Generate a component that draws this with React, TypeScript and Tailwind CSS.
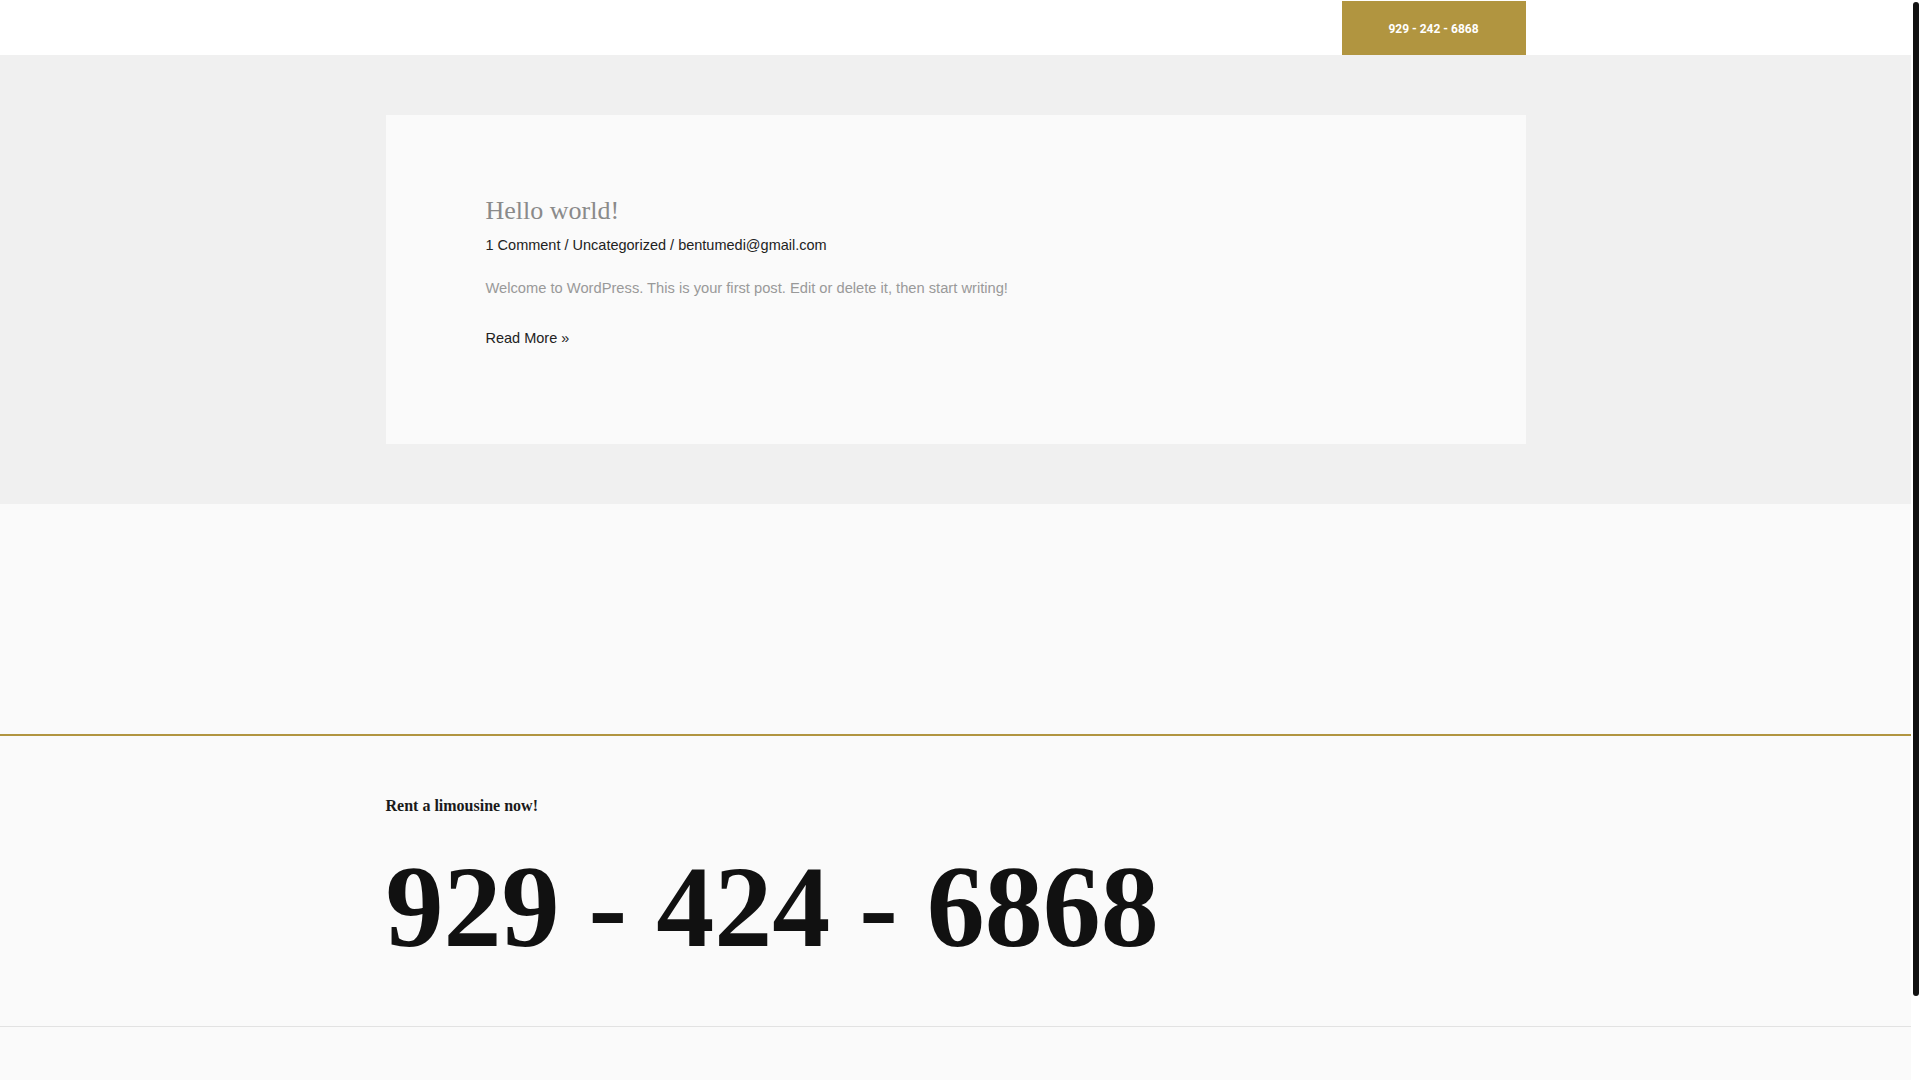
import React from 'react'

const serif = 'font-["Liberation_Serif",_"Times_New_Roman",_serif]'
const sans = 'font-["Liberation_Sans",_Arial,_sans-serif]'

function Header() {
  return (
    <header className="h-[55px] bg-white pt-px">
      <div className="mx-auto flex h-full max-w-[1140px] justify-end">
        <a
          href="#"
          className="flex h-[54px] w-[184px] items-center justify-center bg-[#b19540] pt-[2px] font-['Roboto',_sans-serif] text-[12px] font-bold text-white"
        >
          929 - 242 - 6868
        </a>
      </div>
    </header>
  )
}

function PostCard() {
  return (
    <article className="bg-[#fafafa] px-[100px] pt-[80px] pb-[94px]">
      <h2 className={`${serif} text-[26px] leading-[32px] text-[#8a8a8a]`}>
        <a href="#">Hello world!</a>
      </h2>
      <div className={`${sans} mt-[6px] text-[14.5px] leading-[24px] text-[#222]`}>
        <a href="#">1 Comment</a> / <a href="#">Uncategorized</a> / <a href="#">bentumedi@gmail.com</a>
      </div>
      <p className={`${sans} mt-[19px] text-[14.7px] leading-[24px] text-[#999]`}>
        Welcome to WordPress. This is your first post. Edit or delete it, then start writing!
      </p>
      <p className={`${sans} mt-[26px] text-[14.5px] leading-[24px] text-[#222]`}>
        <a href="#">Read More »</a>
      </p>
    </article>
  )
}

function CallToAction() {
  return (
    <section className="border-t-2 border-[#b19540] bg-[#fafafa]">
      <div className="mx-auto max-w-[1140px] pt-[56px] pb-[61px]">
        <p className={`${serif} text-[16px] font-bold leading-[27px] text-[#1a1a1a]`}>Rent a limousine now!</p>
        <p className={`${serif} mt-[30px] text-[116px] font-bold leading-[116px] text-[#111]`}>929 - 424 - 6868</p>
      </div>
    </section>
  )
}

export default function App() {
  return (
    <div className="flex h-screen w-full overflow-hidden bg-white">
      <div className="min-w-0 flex-1 overflow-hidden">
        <Header />

        <main className="bg-[#f0f0f0] py-[60px]">
          <div className="mx-auto max-w-[1140px]">
            <PostCard />
          </div>
        </main>

        {/* empty band before the call-to-action */}
        <div className="h-[230px] bg-[#fafafa]" />

        <CallToAction />

        <footer className="h-[60px] border-t border-[#e2e2e2] bg-[#fafafa]" />
      </div>

      {/* page scrollbar */}
      <div className="flex w-[9px] shrink-0 justify-center bg-white pt-[2px]">
        <div className="h-[994px] w-[6px] rounded-full bg-[#111]" />
      </div>
    </div>
  )
}
